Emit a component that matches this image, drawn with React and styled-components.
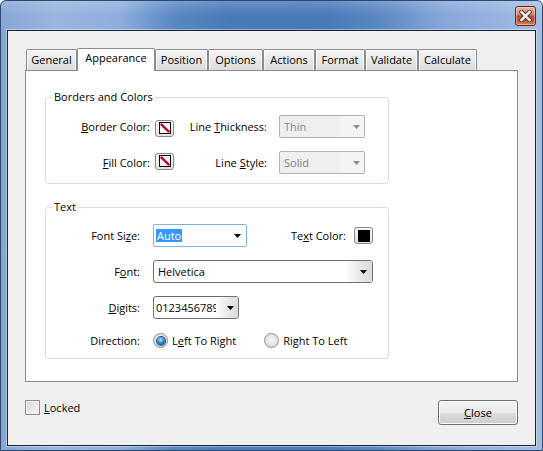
import React from 'react';
import styled, { createGlobalStyle } from 'styled-components';

const Global = createGlobalStyle`
  html, body { margin: 0; padding: 0; background: #fff; }
  body { font-family: "Open Sans", "Noto Sans", sans-serif; font-size: 11px; color: #000; }
  #root { width: 543px; height: 451px; }
  * { box-sizing: border-box; }
`;

const Window = styled.div`
  width: 543px;
  height: 451px;
  border: 1px solid #2a4a73;
  border-radius: 6px 6px 0 0;
  background:
    linear-gradient(180deg, rgba(255,255,255,0.18) 0px, rgba(255,255,255,0) 14px),
    linear-gradient(90deg, #86a6d3 0%, #9ab6de 10%, #8eaedb 22%, #5a87c3 32%, #4b7abb 42%, #4a79ba 60%, #5b88c4 70%, #86a8d8 82%, #97b4de 92%, #a4bde1 100%);
  display: flex;
  flex-direction: column;
  padding: 0 6px 4px;
  overflow: hidden;
`;

const TitleBar = styled.div`
  height: 29px;
  flex: none;
  display: flex;
  justify-content: flex-end;
  align-items: flex-start;
  padding-top: 5px;
`;

const CloseX = styled.div`
  width: 21px;
  height: 20px;
  border: 1px solid #5e2a1e;
  border-radius: 3px;
  background: linear-gradient(180deg, #eab3a3 0%, #dc8a72 40%, #c64a2e 52%, #c7502f 78%, #e0896a 100%);
  box-shadow: inset 0 0 0 1px rgba(255,255,255,0.35);
  display: flex;
  align-items: center;
  justify-content: center;
`;

const Client = styled.div`
  flex: 1;
  display: flex;
  flex-direction: column;
  border: 1px solid #1a2433;
  background: #f0f0f0;
  padding: 17px 17px 20px;
  box-shadow: 0 0 0 1px rgba(255,255,255,0.4);
`;

const TabStrip = styled.div`
  display: flex;
  align-items: flex-end;
  height: 23px;
  padding-left: 1px;
  position: relative;
  z-index: 1;
  flex: none;
`;

const Tab = styled.div`
  width: ${p => p.$w}px;
  height: ${p => (p.$active ? 23 : 21)}px;
  margin-bottom: ${p => (p.$active ? 0 : 1)}px;
  border: 1px solid #898c95;
  border-bottom: none;
  border-radius: 2px 2px 0 0;
  background: ${p => (p.$active ? '#fff' : 'linear-gradient(180deg, #f5f5f5 0%, #e9e9e9 50%, #dcdcdc 100%)')};
  box-shadow: ${p => (p.$active ? 'none' : 'inset 0 1px 0 #fff, inset 1px 0 0 rgba(255,255,255,0.7), inset -1px 0 0 rgba(255,255,255,0.7)')};
  display: flex;
  justify-content: center;
  align-items: flex-start;
  padding-top: ${p => (p.$active ? 2 : 3)}px;
  line-height: 14px;
  white-space: nowrap;
`;

const Panel = styled.div`
  flex: 1;
  margin-top: -1px;
  border: 1px solid #898c95;
  background: #fff;
  padding: 19px 0 0 19px;
  display: flex;
  flex-direction: column;
  gap: 16px;
`;

const Group = styled.fieldset`
  width: 344px;
  margin: 0;
  padding: ${p => p.$pt}px 0 9px 0;
  border: 1px solid #d5dfe5;
  border-radius: 3px;
  min-width: 0;
`;

const Legend = styled.legend`
  margin-left: 6px;
  padding: 0 2px;
  line-height: 14px;
`;

const BordersGrid = styled.div`
  display: grid;
  grid-template-columns: 109px 19px 105px 86px;
  grid-auto-rows: 23px;
  row-gap: 13px;
  align-items: center;
`;

const TextGrid = styled.div`
  display: grid;
  grid-template-columns: 107px 220px;
  grid-template-rows: 23px 23px 23px 17px;
  row-gap: 13px;
  align-items: center;
`;

const Label = styled.div`
  text-align: right;
  padding-right: ${p => p.$pr || 0}px;
  line-height: 14px;
  white-space: nowrap;
`;

const SwatchBtn = styled.div`
  width: 19px;
  height: 17px;
  border: 1px solid #8a8a8a;
  border-radius: 3px;
  background: linear-gradient(180deg, #f7f7f7, #e2e2e2);
  display: flex;
  align-items: center;
  justify-content: center;
  margin-top: ${p => p.$mt || 0}px;
`;

const tones = {
  disabled: { border: '#adb2b5', bg: '#efefef', color: '#838383', zone: '#f4f4f4', radius: 2 },
  edit: { border: '#7eb4ea', bg: '#fff', color: '#000', zone: '#fff', radius: 2 },
  list: { border: '#707070', bg: '#fff', color: '#000', zone: 'linear-gradient(90deg, rgba(255,255,255,0) 0%, #e6e6e6 60%, #dcdcdc 100%)', radius: 3 },
};

const Drop = styled.div`
  width: ${p => p.$w}px;
  height: 23px;
  display: flex;
  align-items: stretch;
  border: 1px solid ${p => tones[p.$tone].border};
  border-radius: ${p => tones[p.$tone].radius}px;
  background: ${p => tones[p.$tone].bg};
  color: ${p => tones[p.$tone].color};
  overflow: hidden;
`;

const DropText = styled.div`
  flex: 1;
  min-width: 0;
  overflow: hidden;
  white-space: nowrap;
  display: flex;
  align-items: center;
  padding-left: ${p => p.$pl}px;
  line-height: 14px;
`;

const DropZone = styled.div`
  width: ${p => p.$zw}px;
  flex: none;
  display: flex;
  align-items: center;
  justify-content: flex-end;
  padding-right: ${p => p.$pr}px;
  background: ${p => tones[p.$tone].zone};
`;

const Selected = styled.span`
  background: #3399ff;
  color: #fff;
  padding: 0 1px;
  line-height: 13px;
`;

const TopRow = styled.div`
  display: flex;
  align-items: center;
  justify-content: space-between;
`;

const Inline = styled.div`
  display: flex;
  align-items: center;
  gap: ${p => p.$gap}px;
`;

const RadioRow = styled.div`
  display: flex;
  align-items: center;
  gap: 28px;
`;

const RadioOpt = styled.label`
  display: flex;
  align-items: center;
  gap: 4px;
  line-height: 14px;
  white-space: nowrap;
`;

const RadioDot = styled.span`
  width: 15px;
  height: 15px;
  border-radius: 50%;
  border: 1px solid #8e8f8f;
  background: radial-gradient(circle at 50% 45%, #f6f6f6 0%, #e2e2e2 60%, #d0d0d0 100%);
  display: flex;
  align-items: center;
  justify-content: center;
  &::after {
    content: '';
    display: ${p => (p.$checked ? 'block' : 'none')};
    width: 8px;
    height: 8px;
    border-radius: 50%;
    background: radial-gradient(circle at 45% 35%, #b7e5ff 0%, #3f95de 40%, #14569f 75%, #0c3c74 100%);
    box-shadow: 0 0 0 1px #2a4f77;
  }
`;

const BottomBar = styled.div`
  flex: none;
  margin-top: 18px;
  height: 25px;
  display: flex;
  justify-content: space-between;
  align-items: flex-start;
`;

const CheckLabel = styled.label`
  display: flex;
  align-items: center;
  gap: 4px;
  height: 15px;
  line-height: 14px;
`;

const CheckBox = styled.span`
  width: 15px;
  height: 15px;
  border: 1px solid #8e8f8f;
  background: linear-gradient(135deg, #d6d6d6 0%, #ececec 60%, #f7f7f7 100%);
  box-shadow: inset 0 0 0 1px #f4f4f4;
`;

const Button = styled.div`
  width: 80px;
  height: 25px;
  border: 1px solid #707070;
  border-radius: 3px;
  background: linear-gradient(180deg, #f2f2f2 0%, #ebebeb 50%, #dddddd 51%, #cfcfcf 100%);
  box-shadow: inset 0 0 0 1px #fbfbfb;
  display: flex;
  align-items: center;
  justify-content: center;
  line-height: 14px;
`;

const Arrow = ({ color = '#000' }) => (
  <svg width="7" height="4" viewBox="0 0 7 4" style={{ display: 'block' }}>
    <path d="M0 0H7L3.5 4Z" fill={color} />
  </svg>
);

const SwatchIcon = ({ fill }) => (
  <svg width="12" height="12" viewBox="0 0 12 12" style={{ display: 'block' }}>
    <rect x="0.5" y="0.5" width="11" height="11" fill={fill || '#fff'} stroke="#000" />
    {!fill && <path d="M1.8 1.8L10.2 10.2" stroke="#c8001e" strokeWidth="2.4" />}
  </svg>
);

const CloseGlyph = () => (
  <svg width="13" height="12" viewBox="0 0 13 12" style={{ display: 'block' }}>
    <path d="M2.5 2L10.5 10M10.5 2L2.5 10" stroke="#4a3a36" strokeWidth="4.4" strokeLinecap="square" />
    <path d="M2.5 2L10.5 10M10.5 2L2.5 10" stroke="#fff" strokeWidth="2.4" strokeLinecap="square" />
  </svg>
);

const tabs = [
  { label: 'General', w: 51 },
  { label: 'Appearance', w: 78, active: true },
  { label: 'Position', w: 53 },
  { label: 'Options', w: 55 },
  { label: 'Actions', w: 52 },
  { label: 'Format', w: 50 },
  { label: 'Validate', w: 53 },
  { label: 'Calculate', w: 59 },
];

const Dropdown = ({ w, tone, zw, pl = 4, pr = 5, children }) => (
  <Drop $w={w} $tone={tone}>
    <DropText $pl={pl}>{children}</DropText>
    <DropZone $zw={zw} $pr={pr} $tone={tone}>
      <Arrow color={tone === 'disabled' ? '#8c8c8c' : '#000'} />
    </DropZone>
  </Drop>
);

export default function App() {
  return (
    <>
      <Global />
      <Window>
        <TitleBar>
          <CloseX><CloseGlyph /></CloseX>
        </TitleBar>
        <Client>
          <TabStrip>
            {tabs.map(t => (
              <Tab key={t.label} $w={t.w} $active={t.active}>{t.label}</Tab>
            ))}
          </TabStrip>
          <Panel>
            <Group $pt={11}>
              <Legend>Borders and Colors</Legend>
              <BordersGrid>
                <Label $pr={5}><u>B</u>order Color:</Label>
                <SwatchBtn $mt={3}><SwatchIcon /></SwatchBtn>
                <Label $pr={12}>Line <u>T</u>hickness:</Label>
                <Dropdown w={86} tone="disabled" zw={24} pl={4} pr={4}>Thin</Dropdown>
                <Label $pr={5}><u>F</u>ill Color:</Label>
                <SwatchBtn $mt={-3}><SwatchIcon /></SwatchBtn>
                <Label $pr={12}>Line <u>S</u>tyle:</Label>
                <Dropdown w={86} tone="disabled" zw={24} pl={4} pr={4}>Solid</Dropdown>
              </BordersGrid>
            </Group>
            <Group $pt={10}>
              <Legend>Text</Legend>
              <TextGrid>
                <Label $pr={13}>Font Si<u>z</u>e:</Label>
                <TopRow>
                  <Dropdown w={94} tone="edit" zw={22} pl={2} pr={5}><Selected>Auto</Selected></Dropdown>
                  <Inline $gap={8}>
                    <Label>Te<u>x</u>t Color:</Label>
                    <SwatchBtn><SwatchIcon fill="#000" /></SwatchBtn>
                  </Inline>
                </TopRow>
                <Label $pr={13}>F<u>o</u>nt:</Label>
                <Dropdown w={220} tone="list" zw={27} pl={4} pr={5}>Helvetica</Dropdown>
                <Label $pr={13}><u>D</u>igits:</Label>
                <Dropdown w={86} tone="list" zw={22} pl={2} pr={4}>0123456789</Dropdown>
                <Label $pr={13}>Direction:</Label>
                <RadioRow>
                  <RadioOpt><RadioDot $checked /><span>L<u>e</u>ft To Right</span></RadioOpt>
                  <RadioOpt><RadioDot /><span>Ri<u>g</u>ht To Left</span></RadioOpt>
                </RadioRow>
              </TextGrid>
            </Group>
          </Panel>
          <BottomBar>
            <CheckLabel><CheckBox /><span><u>L</u>ocked</span></CheckLabel>
            <Button><span><u>C</u>lose</span></Button>
          </BottomBar>
        </Client>
      </Window>
    </>
  );
}
